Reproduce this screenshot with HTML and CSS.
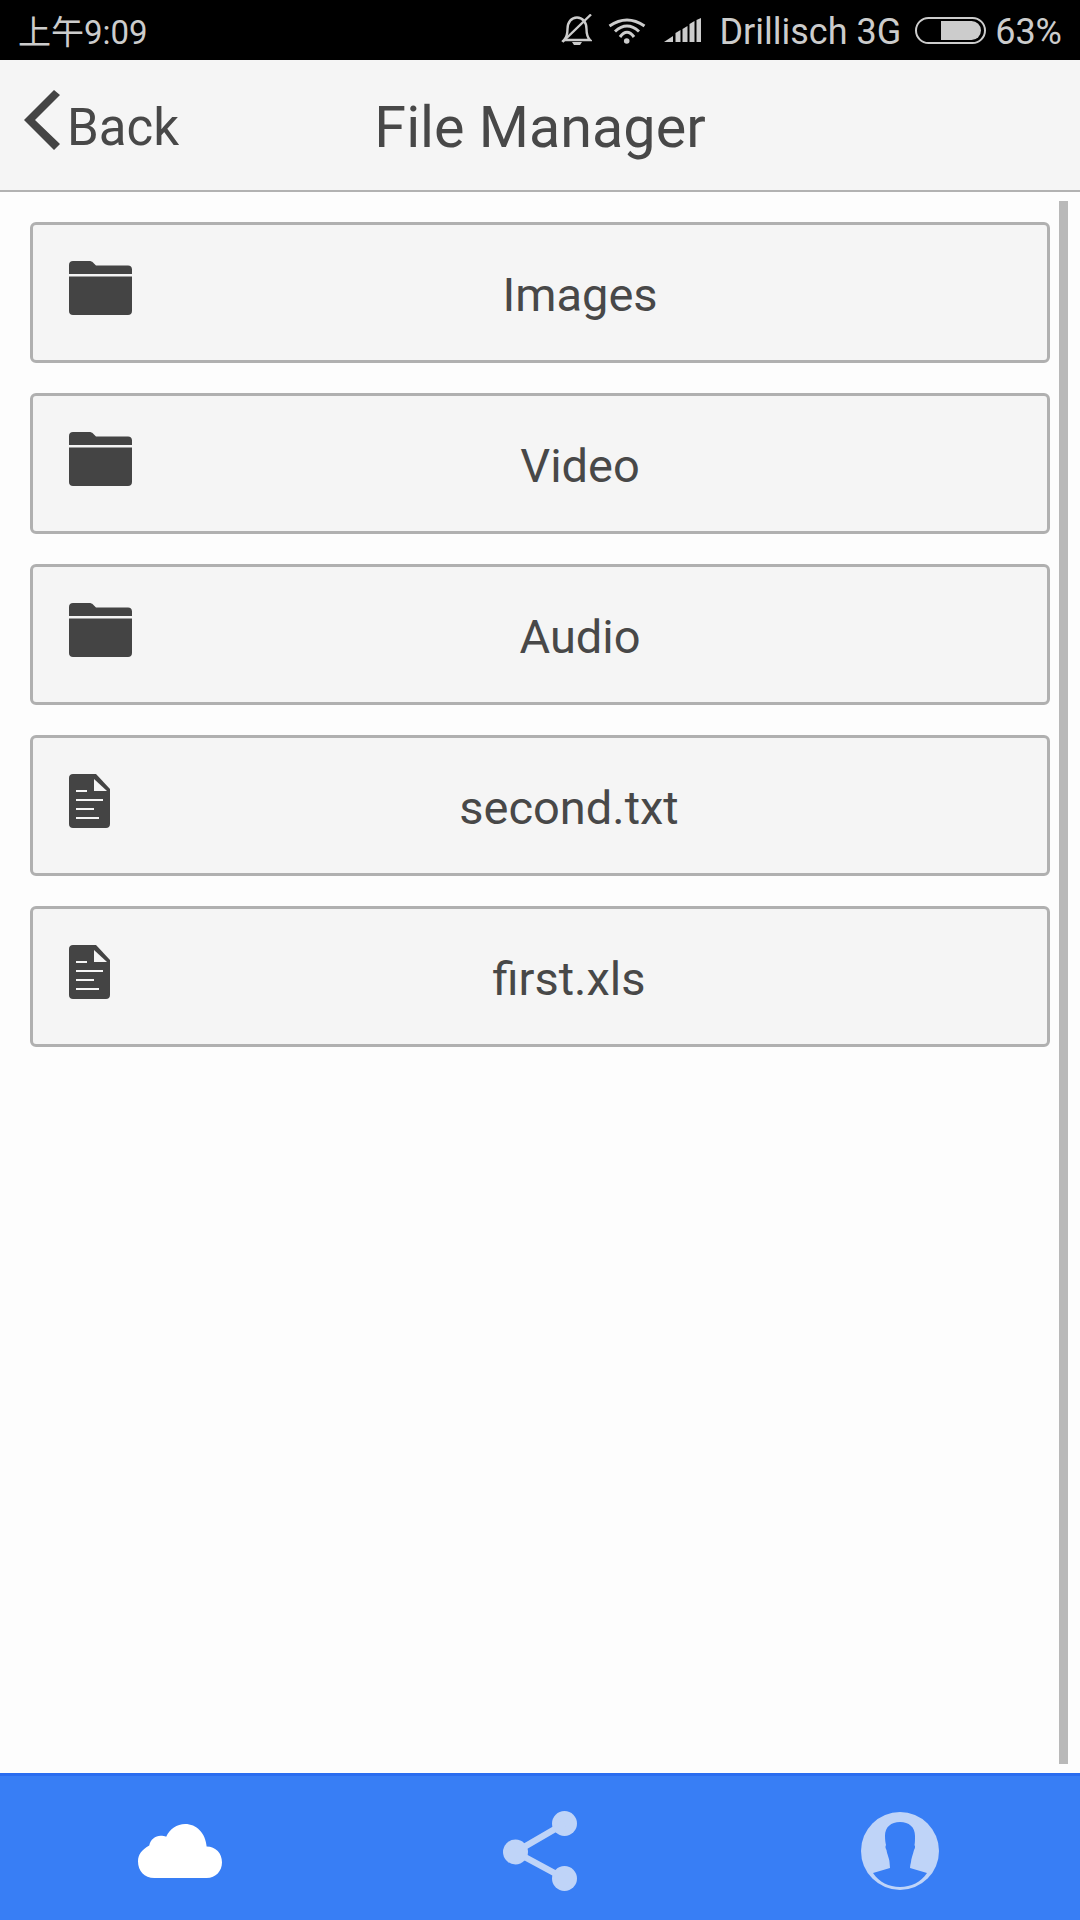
FILE: index.html
```html
<!DOCTYPE html>
<html lang="en">

<head>
  <meta charset="UTF-8">
  <meta name="viewport" content="width=device-width, initial-scale=1.0">
  <title>File Manager</title>
  <link rel="stylesheet" href="styles.css">
</head>

<body>
  <div class="status-bar">
    <span class="clock">上午9:09</span>
    <div class="status-right">
      <svg class="st-bell" width="32" height="32" viewBox="0 0 32 32" fill="none" stroke="#ccc" stroke-width="2.4">
        <path d="M4 26c3-3 3.500-6 3.500-11C7.500 8 11.500 3.500 17 3.500S26.500 8 26.500 15c0 5 .5 8 3.500 11z" />
        <path d="M12 28h10l-2 3h-6z" fill="#ccc" stroke="none" />
        <path d="M2.500 28 31 .5" />
      </svg>
      <svg class="st-wifi" width="38" height="27" viewBox="0 0 38 27" fill="none" stroke="#ccc" stroke-width="3">
        <path d="M1.500 9Q19-3 36.500 9" />
        <path d="M7 14.500Q19 3.500 31 14.500" />
        <path d="M12 20Q19 10.500 26 20" />
        <circle cx="18.700" cy="24" r="2.800" fill="#ccc" stroke="none" />
      </svg>
      <svg class="st-signal" width="37" height="24" viewBox="0 0 37 24" fill="#ccc">
        <path d="M0 24 9 18V24z" />
        <path d="M11.500 15 16.500 12V24H11.500z" />
        <path d="M18.500 11 23.500 8V24H18.500z" />
        <path d="M25.500 6 30.500 3V24H25.500z" />
        <path d="M32.500 2 37 0V24H32.500z" />
      </svg>
      <span class="carrier">Drillisch 3G</span>
      <div class="battery">
        <div class="battery-fill"></div>
      </div>
      <span class="percent">63%</span>
    </div>
  </div>

  <header class="top-bar">
    <a class="back">
      <svg width="36" height="60" viewBox="0 0 36 60" fill="#444">
        <path d="M30 0 36 5 11 30 36 54 30 60 0 30z" />
      </svg>
      <span>Back</span>
    </a>
    <h1>File Manager</h1>
  </header>

  <main class="content">
    <div class="scrollbar"></div>
    <div class="card">
      <svg class="icon" width="63" height="54" viewBox="0 0 63 54" fill="#444">
        <use href="#folder" />
      </svg>
      <span class="label">Images</span>
    </div>
    <div class="card">
      <svg class="icon" width="63" height="54" viewBox="0 0 63 54" fill="#444">
        <use href="#folder" />
      </svg>
      <span class="label">Video</span>
    </div>
    <div class="card">
      <svg class="icon" width="63" height="54" viewBox="0 0 63 54" fill="#444">
        <use href="#folder" />
      </svg>
      <span class="label">Audio</span>
    </div>
    <div class="card">
      <svg class="icon" width="41" height="54" viewBox="0 0 41 54">
        <use href="#file" />
      </svg>
      <span class="label">second.txt</span>
    </div>
    <div class="card">
      <svg class="icon" width="41" height="54" viewBox="0 0 41 54">
        <use href="#file" />
      </svg>
      <span class="label">first.xls</span>
    </div>
  </main>

  <footer class="tabs">
    <a class="tab">
      <svg width="84" height="54" viewBox="0 0 82 55" preserveAspectRatio="none" fill="#fff">
        <path d="M16 55C6 55 0 48 0 38c0-7 4-12 11-16 1-6 6-10 11-10 2 0 4 .5 5.500 1C31 5 38 0 46 0c11 0 20 9 21 23 9 0 15 7 15 16 0 9-6 16-15 16z" />
      </svg>
    </a>
    <a class="tab">
      <svg width="74" height="80" viewBox="0 0 74 80" fill="#bfd4f8">
        <circle cx="12.500" cy="41" r="12.500" />
        <circle cx="61.500" cy="12.500" r="12.500" />
        <circle cx="61.500" cy="67.500" r="12.500" />
        <path d="M12.500 41 61.500 12.500M12.500 41 61.500 67.500" stroke="#bfd4f8" stroke-width="6.500" fill="none" />
      </svg>
    </a>
    <a class="tab">
      <svg width="78" height="78" viewBox="0 0 78 78">
        <circle cx="39" cy="39" r="39" fill="#bfd4f8" />
        <path d="M39 10c-9 0-15 5-15 14 0 4 .5 7 1 9-1 2-.5 3 .5 5 .5 4 3 9 3 12 0 2 .5 4 .5 6L12 61c6 9 16 14 27 14s21-5 27-14l-17-5c0-2 .5-4 1-6 0-3 2-8 3-12 1-2 1.500-3 .5-5 .5-2 .5-5 .5-9 0-9-6-14-15-14z" fill="#387ef5" />
      </svg>
    </a>
  </footer>

  <svg class="defs" width="0" height="0">
    <defs>
      <g id="folder">
        <path d="M0 4C0 1.500 1.500 0 4 0H20C22 0 23 .5 24 1.500L27 4.500H59C61.500 4.500 63 6 63 8.500V13H0z" />
        <path d="M0 15.500H63V50C63 52.500 61.500 54 59 54H4C1.500 54 0 52.500 0 50z" />
      </g>
      <g id="file">
        <path d="M4 0H27L41 15V50C41 52.500 39.500 54 37 54H4C1.500 54 0 52.500 0 50V4C0 1.500 1.500 0 4 0z" fill="#444" />
        <path d="M25 5 38 17H25z" fill="#f5f5f5" />
        <path d="M7 16H18V18H7zM7 25H34V27H7zM7 34H25V36H7zM7 43H30V45H7z" fill="#f5f5f5" />
      </g>
    </defs>
  </svg>
</body>

</html>
```

FILE: styles.css
```css
* {
  box-sizing: border-box;
}

body {
  font-family: Roboto, 'Noto Sans CJK SC', sans-serif;
  margin: 0;
  height: 1920px;
  display: flex;
  flex-direction: column;
  background-color: #fdfdfd;
  color: #484848;
}

.status-bar {
  height: 60px;
  flex: none;
  display: flex;
  align-items: center;
  justify-content: space-between;
  padding: 0 18px 0 18px;
  background-color: black;
  color: #ccc;
  font-size: 36px;
}

.clock {
  font-size: 33px;
}

.status-right {
  display: flex;
  align-items: center;
}

.st-bell {
  margin-right: 16px;
}

.st-wifi {
  margin-right: 18px;
}

.st-signal {
  margin-right: 18px;
}

.carrier,
.percent {
  padding-top: 3px;
}

.battery {
  width: 71px;
  height: 27px;
  margin: 0 9px 0 14px;
  padding: 2px 3px 2px 24px;
  border: 2px solid #ccc;
  border-radius: 14px;
}

.battery-fill {
  height: 100%;
  background-color: #ccc;
  border-radius: 0 10px 10px 0;
}

.top-bar {
  height: 132px;
  flex: none;
  position: relative;
  display: flex;
  align-items: center;
  justify-content: center;
  padding-top: 5px;
  background-color: #f5f5f5;
  border-bottom: 2px solid #b2b2b2;
}

.top-bar h1 {
  margin: 0;
  font-size: 57.500px;
  font-weight: 400;
}

.back {
  position: absolute;
  left: 24px;
  top: 30px;
  display: flex;
  align-items: flex-start;
  font-size: 51px;
}

.back span {
  margin: 8px 0 0 7px;
}

.content {
  flex: 1;
  position: relative;
  display: flex;
  flex-direction: column;
  gap: 30px;
  padding: 30px 30px 0;
}

.scrollbar {
  position: absolute;
  top: 9px;
  right: 12px;
  width: 9px;
  height: 1563px;
  background-color: #b9b9b9;
}

.card {
  height: 141px;
  display: flex;
  align-items: flex-start;
  padding: 36px 19px 0 36px;
  background-color: #f5f5f5;
  border: 3px solid #b0b0b0;
  border-radius: 6px;
}

.icon {
  flex: none;
}

.label {
  flex: 1;
  text-align: center;
  font-size: 47px;
  line-height: 60px;
  margin-top: 4px;
}

.tabs {
  height: 147px;
  flex: none;
  display: grid;
  grid-template-columns: repeat(3, 1fr);
  background-color: #387ef5;
  border-top: 3px solid #2a6df0;
}

.tab {
  display: flex;
  align-items: center;
  justify-content: center;
  padding-top: 6px;
}

.defs {
  position: absolute;
}
```
